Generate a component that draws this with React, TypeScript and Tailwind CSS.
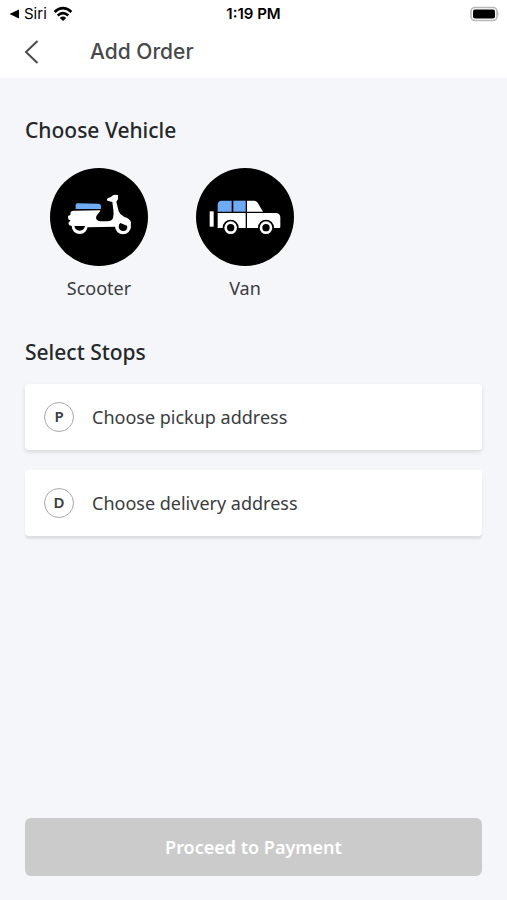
import React from 'react';

function ScooterIcon() {
    return (
        <svg viewBox="0 0 294 294" className="w-full h-full" aria-hidden="true">
            {/* seat */}
            <path d="M82 106 L146 107 Q153 108 153 115 L153 123 L77 123 L77 112 Q77 106 82 106 Z" fill="#6fabf5" />
            {/* body */}
            <path
                d="M72 128 L151 127 Q150 132 144 137 Q136 146 139 153 Q142 160 152 160 L172 160 Q185 160 189 151 Q192 139 190 125 L187 102 L172 98 Q168 93 174 90 L183 87 Q186 81 195 80 L204 81 L204 94 L199 101 L206 130 Q210 141 222 146 Q240 151 243 163 L242 170 L236 174 L197 176 L112 178 L62 173 Q54 172 56 163 L62 158 L55 154 L54 144 L61 141 L62 132 Q66 128 72 128 Z"
                fill="#fff"
            />
            {/* wheels */}
            <circle cx="89" cy="174" r="24" fill="#fff" />
            <path d="M73 174 L105 174 Q102 188 89 188 Q76 188 73 174 Z" fill="#000" />
            <circle cx="219" cy="175" r="24" fill="#fff" />
            <path d="M206 177 Q206 168 211 165 L231 173 Q234 180 229 186 Q224 190 218 189 Q208 187 206 177 Z" fill="#000" />
        </svg>
    );
}

function VanIcon() {
    return (
        <svg viewBox="0 0 294 294" className="w-full h-full" aria-hidden="true">
            {/* spare wheel */}
            <rect x="41" y="130" width="12" height="46" fill="#fff" />
            {/* boxes */}
            <path d="M76 98 L107 98 L107 131 L65 131 L65 109 Q66 99 76 98 Z" fill="#6fabf5" />
            <rect x="112" y="98" width="37" height="33" fill="#6fabf5" />
            {/* cab and body */}
            <path d="M153 98 L174 98 Q181 98 185 104 L201 131 L153 131 Z" fill="#fff" />
            <path d="M65 135 L149 135 L149 180 L65 180 Z" fill="#fff" />
            <path d="M153 135 L241 135 Q253 137 253 149 L253 176 Q253 180 249 180 L153 180 Z" fill="#fff" />
            {/* wheels */}
            <circle cx="104" cy="179" r="24" fill="#000" />
            <circle cx="104" cy="179" r="15" fill="none" stroke="#fff" strokeWidth="8" />
            <circle cx="210" cy="179" r="24" fill="#000" />
            <circle cx="210" cy="179" r="15" fill="none" stroke="#fff" strokeWidth="8" />
        </svg>
    );
}

const vehicles = [
    { name: 'Scooter', Icon: ScooterIcon },
    { name: 'Van', Icon: VanIcon },
];

const stops = [
    { letter: 'P', label: 'Choose pickup address' },
    { letter: 'D', label: 'Choose delivery address' },
];

export default function App() {
    return (
        <div className="min-h-screen flex flex-col bg-[#f4f6fa] text-[#252729] font-['Noto_Sans',sans-serif]">
            <header className="bg-white font-[Inter,sans-serif]">
                {/* --- STATUS BAR --- */}
                <div className="h-7 grid grid-cols-3 items-center px-2 text-[15px] leading-5 text-black">
                    <div className="flex items-center gap-1">
                        <svg viewBox="0 0 12 12" className="w-3 h-3" aria-hidden="true">
                            <path d="M1.5 6 L11 1.5 L11 10.5 Z" fill="#000" />
                        </svg>
                        <span>Siri</span>
                        <svg viewBox="0 0 20 15" className="w-5 h-4 ml-0.5" fill="none" stroke="#000" strokeWidth="2.7" aria-hidden="true">
                            <path d="M1.6 5.4 Q10 -2 18.4 5.4" />
                            <path d="M4.7 8.9 Q10 4.3 15.3 8.9" />
                            <path d="M10 14.5 L6.8 11.4 Q10 8.8 13.2 11.4 Z" fill="#000" stroke="none" />
                        </svg>
                    </div>
                    <span className="text-center font-semibold">1:19 PM</span>
                    <svg viewBox="0 0 30 16" className="w-[30px] h-4 justify-self-end" aria-hidden="true">
                        <rect x="2" y="1.5" width="26" height="13" rx="4" fill="#fff" stroke="#b9b9b9" strokeWidth="1.6" />
                        <rect x="4" y="3.5" width="22" height="9" rx="2" fill="#000" />
                        <path d="M28.5 5.5 Q31 8 28.5 10.5 Z" fill="#b9b9b9" />
                    </svg>
                </div>
                {/* --- NAV BAR --- */}
                <div className="h-[50px] flex items-center gap-12 px-6 pb-0.5">
                    <button type="button" aria-label="Back" className="w-[18px]">
                        <svg viewBox="0 0 18 26" className="w-full" fill="none" stroke="#48494b" strokeWidth="2" aria-hidden="true">
                            <path d="M13.5 2 L2 13 L13.5 24" />
                        </svg>
                    </button>
                    <h1 className="text-[21px] leading-7 font-medium text-[#48494b]">Add Order</h1>
                </div>
            </header>

            <main className="flex-1 flex flex-col px-[25px] pt-[38px] pb-6">
                <section>
                    <h2 className="text-[21px] leading-7 font-medium">Choose Vehicle</h2>
                    <div className="flex gap-12 px-[25px] pt-6">
                        {vehicles.map(({ name, Icon }) => (
                            <button key={name} type="button" className="flex flex-col items-center gap-2 text-lg leading-7 text-[#3a3c3e]">
                                <span className="w-[98px] h-[98px] rounded-full bg-black">
                                    <Icon />
                                </span>
                                {name}
                            </button>
                        ))}
                    </div>
                </section>

                <section className="pt-9">
                    <h2 className="text-[21px] leading-7 font-medium">Select Stops</h2>
                    <div className="flex flex-col gap-5 pt-[18px]">
                        {stops.map(({ letter, label }) => (
                            <button
                                key={letter}
                                type="button"
                                className="h-[66px] flex items-center gap-[18px] px-[19px] rounded-sm bg-white text-lg text-[#3a3c3e] shadow-[0_2px_4px_rgba(0,0,0,0.12)] last:shadow-[0_3px_2px_rgba(0,0,0,0.09)]"
                            >
                                <span className="w-[30px] h-[30px] flex items-center justify-center rounded-full border border-[#a8a9ab] text-[15px] font-semibold">
                                    {letter}
                                </span>
                                {label}
                            </button>
                        ))}
                    </div>
                </section>

                <button type="button" disabled className="mt-auto h-[58px] w-full rounded-md bg-[#cbcbcb] text-lg font-semibold text-white">
                    Proceed to Payment
                </button>
            </main>
        </div>
    );
}
